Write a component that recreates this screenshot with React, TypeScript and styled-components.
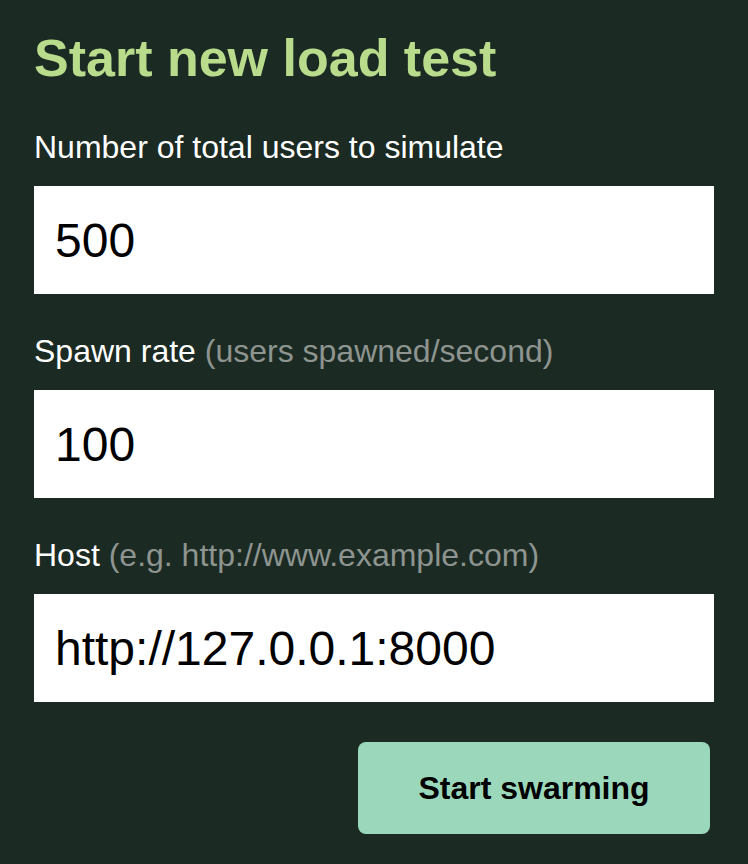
import React, { useState } from 'react';
import styled, { createGlobalStyle } from 'styled-components';

const GlobalStyle = createGlobalStyle`
  html, body {
    margin: 0;
    padding: 0;
    background: #1b2a23;
  }
  body {
    font-family: "Liberation Sans", Arial, sans-serif;
    min-height: 864px;
  }
`;

const Page = styled.div`
  width: 748px;
  min-height: 864px;
  box-sizing: border-box;
  padding: 28px 34px 0 34px;
  background: #1b2a23;
  display: flex;
  flex-direction: column;
`;

const Title = styled.h1`
  margin: 0 0 41px 0;
  font-size: 52px;
  line-height: 60px;
  font-weight: 700;
  color: #b8dc8b;
`;

const Form = styled.form`
  display: flex;
  flex-direction: column;
  gap: 39px;
`;

const Field = styled.label`
  display: flex;
  flex-direction: column;
  gap: 20px;
`;

const LabelText = styled.span`
  font-size: 32px;
  line-height: 37px;
  color: #ffffff;
`;

const Hint = styled.span`
  color: #8e9490;
`;

const Input = styled.input`
  width: 680px;
  height: 108px;
  box-sizing: border-box;
  padding: 0 21px;
  border: none;
  border-radius: 0;
  outline: none;
  background: #ffffff;
  color: #000000;
  font-family: "Liberation Sans", Arial, sans-serif;
  font-size: 48px;
`;

const Actions = styled.div`
  display: flex;
  justify-content: flex-end;
  padding-right: 4px;
  margin-top: 1px;
`;

const SubmitButton = styled.button`
  width: 352px;
  height: 92px;
  border: none;
  border-radius: 8px;
  background: #9bd8bb;
  color: #000000;
  font-family: "Liberation Sans", Arial, sans-serif;
  font-size: 32px;
  font-weight: 700;
  cursor: pointer;
`;

export default function App() {
  const [users, setUsers] = useState('500');
  const [rate, setRate] = useState('100');
  const [host, setHost] = useState('http://127.0.0.1:8000');

  return (
    <>
      <GlobalStyle />
      <Page>
        <Title>Start new load test</Title>
        <Form onSubmit={(e) => e.preventDefault()}>
          <Field>
            <LabelText>Number of total users to simulate</LabelText>
            <Input value={users} onChange={(e) => setUsers(e.target.value)} />
          </Field>
          <Field>
            <LabelText>
              Spawn rate <Hint>(users spawned/second)</Hint>
            </LabelText>
            <Input value={rate} onChange={(e) => setRate(e.target.value)} />
          </Field>
          <Field>
            <LabelText>
              Host <Hint>(e.g. http://www.example.com)</Hint>
            </LabelText>
            <Input value={host} onChange={(e) => setHost(e.target.value)} />
          </Field>
          <Actions>
            <SubmitButton type="submit">Start swarming</SubmitButton>
          </Actions>
        </Form>
      </Page>
    </>
  );
}
